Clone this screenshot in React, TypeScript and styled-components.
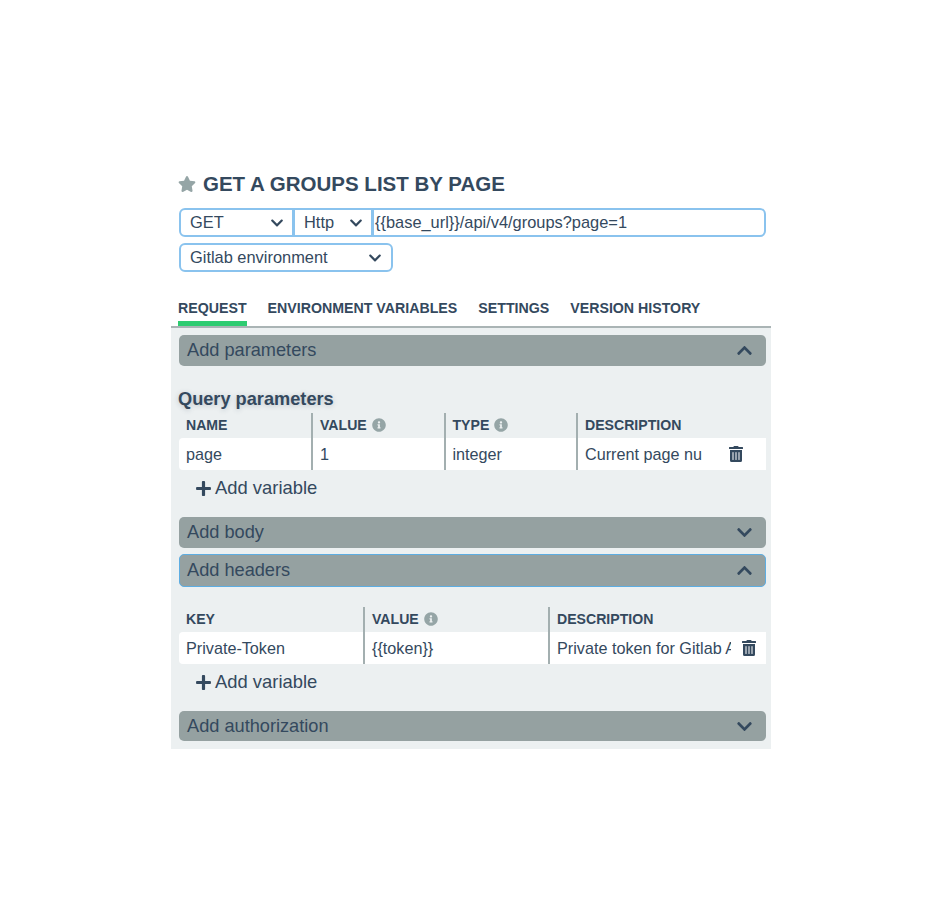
import styled, { createGlobalStyle } from 'styled-components';
import { FaChevronDown, FaChevronUp, FaInfoCircle, FaPlus, FaStar, FaTrashAlt } from 'react-icons/fa';

const GlobalStyle = createGlobalStyle`
  body {
    margin: 0;
    background: #fff;
    font-family: "Liberation Sans", Arial, sans-serif;
    color: #34495e;
  }
`;

const Page = styled.div`
  width: 600px;
  height: 916px;
  box-sizing: border-box;
  margin-left: 171px;
  padding-top: 172px;
`;

const Title = styled.h1`
  display: flex;
  align-items: center;
  gap: 7px;
  height: 24px;
  margin: 0 0 12px 7px;
  font-size: 20.5px;
  font-weight: 700;
  line-height: 24px;
  svg {
    color: #95a5a6;
  }
`;

const Controls = styled.div`
  display: flex;
  flex-direction: column;
  gap: 6px;
  width: 587px;
  margin-left: 8px;
`;

const InputRow = styled.div`
  display: flex;
  height: 29px;
`;

const Field = styled.div<{ $width?: number; $left?: boolean; $right?: boolean }>`
  display: flex;
  align-items: center;
  justify-content: space-between;
  box-sizing: border-box;
  flex: ${p => (p.$width ? `0 0 ${p.$width}px` : '1')};
  height: 29px;
  padding: 0 ${p => (p.$right ? '9px' : '8px')} 0 ${p => (p.$width ? '9px' : '1px')};
  border: 2px solid #8ac3ee;
  border-radius: ${p => (p.$left ? '6px' : '0')} ${p => (p.$right ? '6px' : '0')} ${p => (p.$right ? '6px' : '0')} ${p => (p.$left ? '6px' : '0')};
  margin-left: ${p => (p.$left ? '0' : '-1px')};
  font-size: 16.4px;
  color: #34495e;
  background: #fff;
`;

const Tabs = styled.div`
  display: flex;
  gap: 21px;
  height: 56px;
  box-sizing: border-box;
  padding: 26px 0 0 7px;
  border-bottom: 2px solid #aab4b5;
`;

const Tab = styled.div<{ $active?: boolean }>`
  height: 28px;
  box-sizing: border-box;
  padding-top: 1px;
  font-size: 14.2px;
  font-weight: 700;
  line-height: 18px;
  border-bottom: 5px solid ${p => (p.$active ? '#2ecc71' : 'transparent')};
`;

const Panel = styled.div`
  display: flex;
  flex-direction: column;
  height: 421px;
  box-sizing: border-box;
  padding: 7px 5px 0 8px;
  background: #ecf0f1;
`;

const Bar = styled.div<{ $focused?: boolean; $mt?: number; $short?: boolean }>`
  display: flex;
  align-items: center;
  justify-content: space-between;
  flex: none;
  box-sizing: border-box;
  height: ${p => (p.$focused ? 33 : p.$short ? 30 : 31)}px;
  margin-top: ${p => p.$mt ?? 0}px;
  padding: 0 ${p => (p.$focused ? 12 : 13)}px 0 ${p => (p.$focused ? 7 : 8)}px;
  background: #95a1a1;
  border: ${p => (p.$focused ? '1px solid #5dade2' : 'none')};
  border-radius: 5px;
  font-size: 18.2px;
  color: #34495e;
`;

const SectionTitle = styled.h2`
  margin: 23px 0 0 -1px;
  height: 24px;
  font-size: 18.2px;
  font-weight: 700;
  line-height: 20px;
  text-shadow: 0 1px 5px rgba(52, 73, 94, 0.25);
`;

const Table = styled.div<{ $columns: string; $mt?: number }>`
  display: grid;
  grid-template-columns: ${p => p.$columns};
  margin-top: ${p => p.$mt ?? 0}px;
`;

const HeadCell = styled.div<{ $divider?: boolean }>`
  display: flex;
  align-items: center;
  gap: 5px;
  box-sizing: border-box;
  height: 25px;
  padding: 0 0 2px 7px;
  border-left: ${p => (p.$divider ? '2px solid #a3afb0' : 'none')};
  font-size: 14.1px;
  font-weight: 700;
  svg {
    color: #95a5a6;
  }
`;

const Cell = styled.div<{ $divider?: boolean; $first?: boolean }>`
  position: relative;
  display: flex;
  align-items: center;
  box-sizing: border-box;
  height: 32px;
  padding: 0 0 0 7px;
  overflow: hidden;
  white-space: nowrap;
  background: #fff;
  border-left: ${p => (p.$divider ? '2px solid #a3afb0' : 'none')};
  border-radius: ${p => (p.$first ? '4px 0 0 4px' : '0')};
  font-size: 16.2px;
`;

const Trash = styled.span<{ $right: number; $cover: number }>`
  position: absolute;
  top: 0;
  right: 0;
  display: flex;
  align-items: center;
  justify-content: flex-end;
  box-sizing: border-box;
  width: ${p => p.$cover}px;
  height: 32px;
  padding-right: ${p => p.$right}px;
  background: #fff;
  border-radius: 0 0 0 4px;
`;

const AddVariable = styled.div`
  display: flex;
  align-items: center;
  gap: 3px;
  flex: none;
  height: 24px;
  margin: 6px 0 0 16px;
  font-size: 18.4px;
`;

const paramColumns = '132px 132.5px 132.5px 190px';
const headerColumns = '184px 185px 218px';

export default function App() {
  return (
    <Page>
      <GlobalStyle />
      <Title>
        <FaStar size={18} />
        GET A GROUPS LIST BY PAGE
      </Title>

      <Controls>
        <InputRow>
          <Field $width={115} $left>
            GET
            <FaChevronDown size={14} />
          </Field>
          <Field $width={80}>
            Http
            <FaChevronDown size={14} />
          </Field>
          <Field $right>{'{{base_url}}/api/v4/groups?page=1'}</Field>
        </InputRow>
        <InputRow>
          <Field $width={214} $left $right>
            Gitlab environment
            <FaChevronDown size={14} />
          </Field>
        </InputRow>
      </Controls>

      <Tabs>
        <Tab $active>REQUEST</Tab>
        <Tab>ENVIRONMENT VARIABLES</Tab>
        <Tab>SETTINGS</Tab>
        <Tab>VERSION HISTORY</Tab>
      </Tabs>

      <Panel>
        <Bar>
          Add parameters
          <FaChevronUp size={17} />
        </Bar>

        <SectionTitle>Query parameters</SectionTitle>
        <Table $columns={paramColumns}>
          <HeadCell>NAME</HeadCell>
          <HeadCell $divider>
            VALUE <FaInfoCircle size={14} />
          </HeadCell>
          <HeadCell $divider>
            TYPE <FaInfoCircle size={14} />
          </HeadCell>
          <HeadCell $divider>DESCRIPTION</HeadCell>
          <Cell $first>page</Cell>
          <Cell $divider>1</Cell>
          <Cell $divider>integer</Cell>
          <Cell $divider>
            Current page number
            <Trash $right={22} $cover={64}>
              <FaTrashAlt size={16} />
            </Trash>
          </Cell>
        </Table>
        <AddVariable>
          <FaPlus size={17} />
          Add variable
        </AddVariable>

        <Bar $mt={17}>
          Add body
          <FaChevronDown size={17} />
        </Bar>
        <Bar $focused $mt={6}>
          Add headers
          <FaChevronUp size={17} />
        </Bar>

        <Table $columns={headerColumns} $mt={20}>
          <HeadCell>KEY</HeadCell>
          <HeadCell $divider>
            VALUE <FaInfoCircle size={14} />
          </HeadCell>
          <HeadCell $divider>DESCRIPTION</HeadCell>
          <Cell $first>Private-Token</Cell>
          <Cell $divider>{'{{token}}'}</Cell>
          <Cell $divider>
            Private token for Gitlab API
            <Trash $right={9} $cover={35}>
              <FaTrashAlt size={16} />
            </Trash>
          </Cell>
        </Table>
        <AddVariable>
          <FaPlus size={17} />
          Add variable
        </AddVariable>

        <Bar $mt={17} $short>
          Add authorization
          <FaChevronDown size={17} />
        </Bar>
      </Panel>
    </Page>
  );
}
